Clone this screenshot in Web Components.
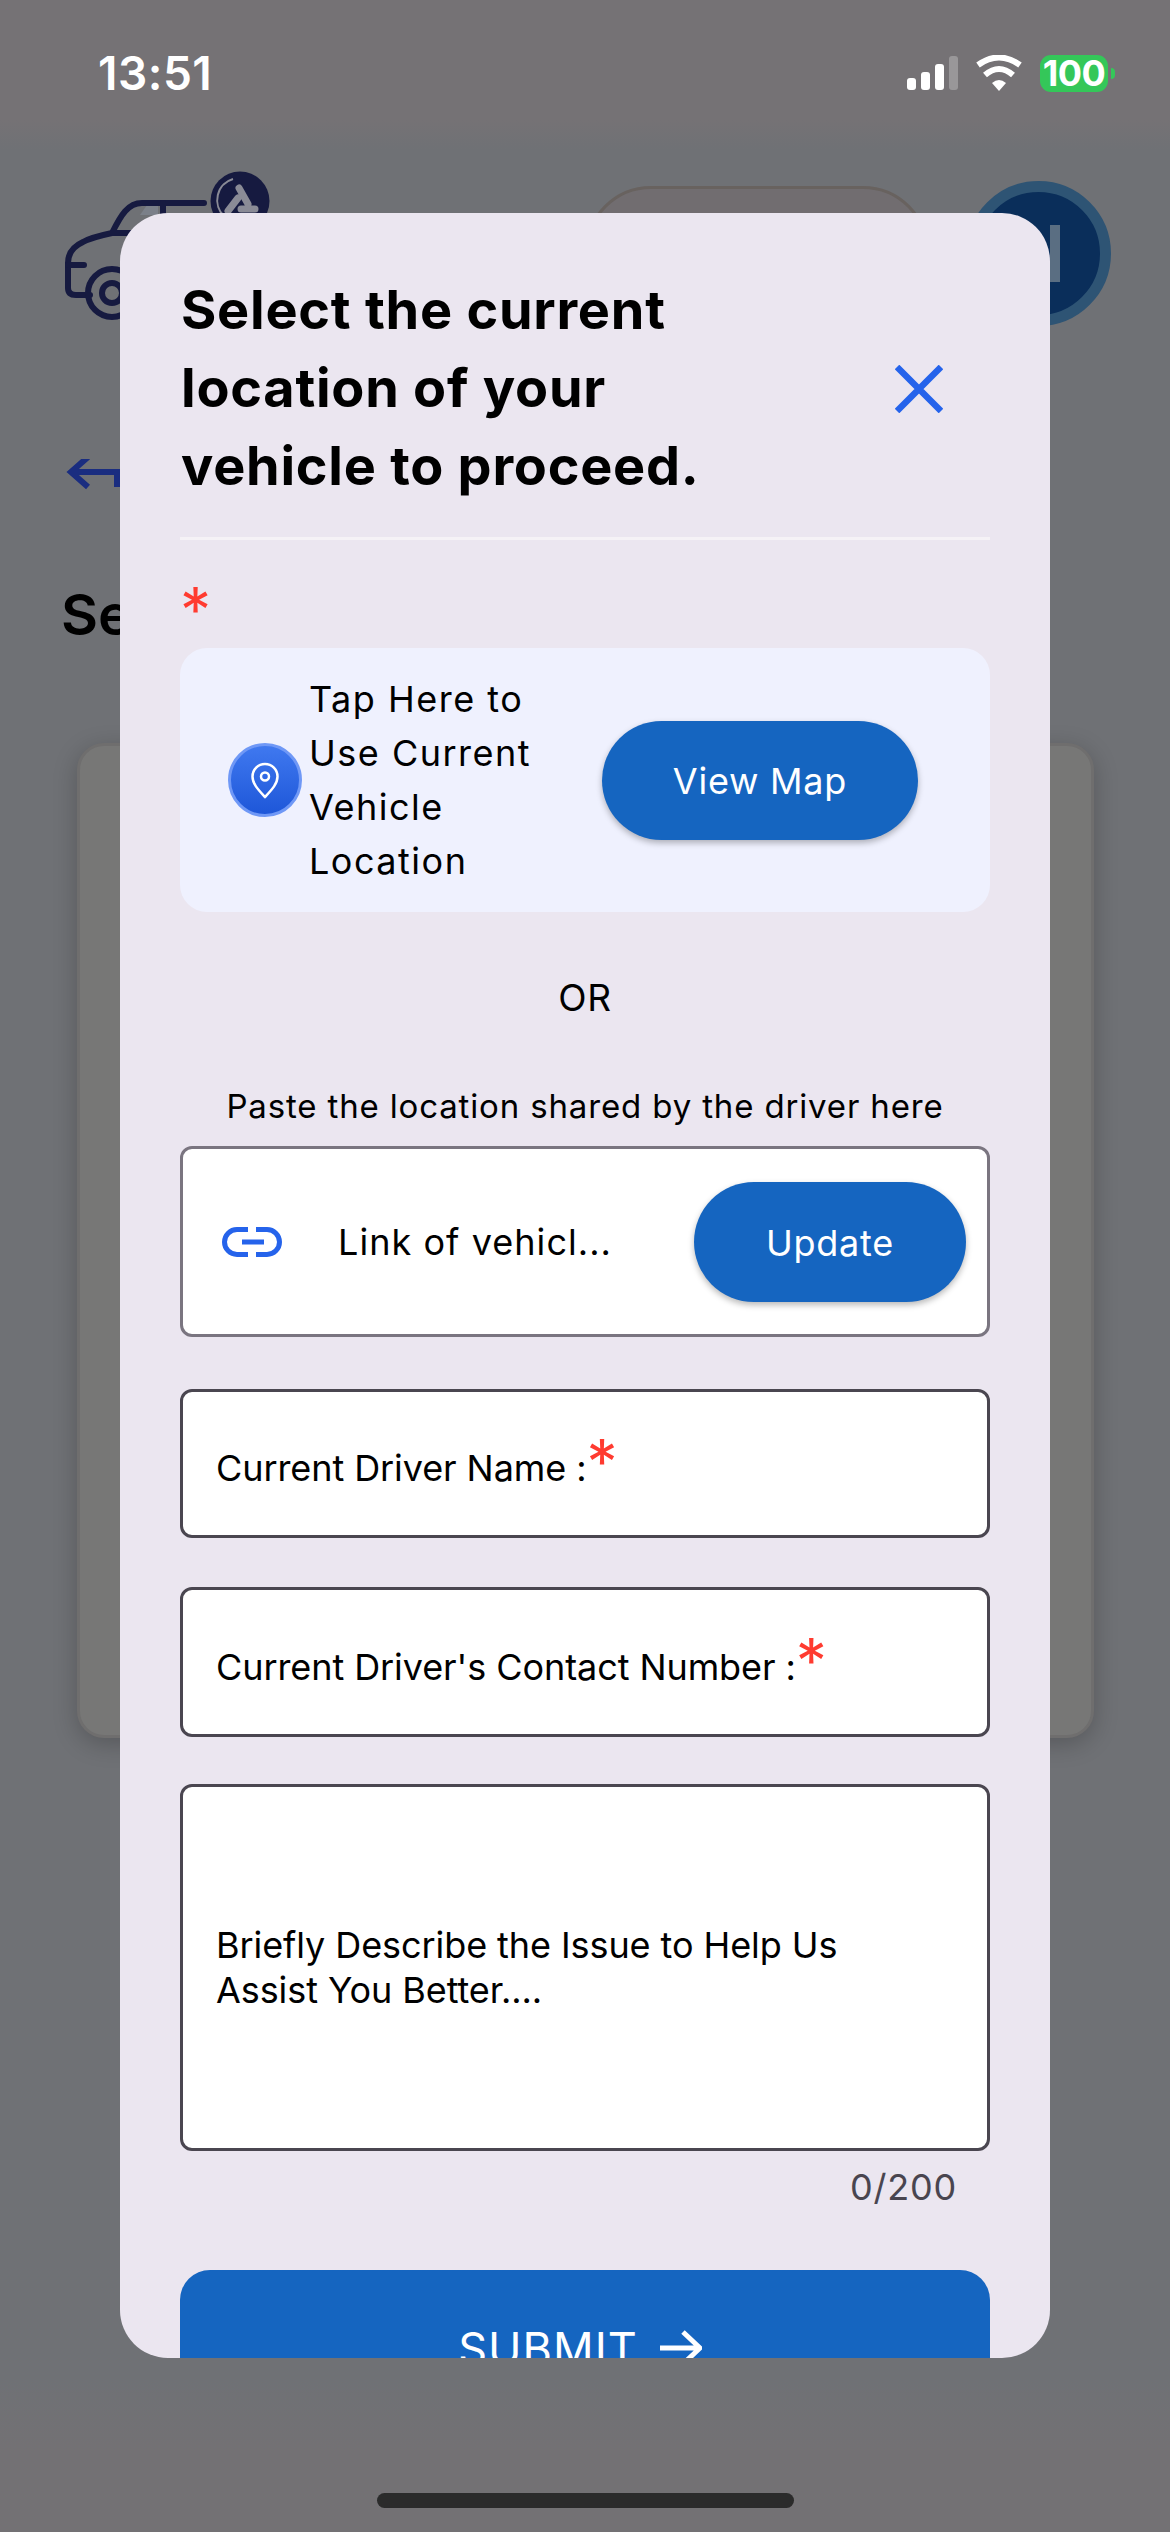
<!DOCTYPE html>
<html lang="en">
<head>
<meta charset="utf-8">
<title>Select location</title>
<style>
html,body{margin:0;padding:0;width:1170px;height:2532px;overflow:hidden;font-family:Inter,"Noto Sans",sans-serif;}
</style>
</head>
<body>
<app-screen>
  <bg-page slot="page"></bg-page>
  <location-modal slot="modal"></location-modal>
</app-screen>
<script>
function def(name, css, html){
  customElements.define(name, class extends HTMLElement{
    constructor(){
      super();
      const r=this.attachShadow({mode:'open'});
      r.innerHTML='<style>'+css+'</style>'+html;
    }
  });
}
def('app-screen',`
 :host{display:block;position:relative;width:1170px;height:2532px;overflow:hidden;font-family:Inter,"Noto Sans",sans-serif;
 background:linear-gradient(180deg,#757275 0,#757275 120px,#6f7175 150px,#6f7175 2380px,#737174 2450px);}
 .m{position:absolute;left:120px;top:213px;}
`,`<slot name="page"></slot><div class="m"><slot name="modal"></slot></div>`);

def('status-bar',`
 :host{display:flex;align-items:center;height:146px;box-sizing:border-box;padding:0 55px 0 98px;color:#fff;}
 .t{font:600 46px/1 Inter,sans-serif;letter-spacing:.5px;flex:1;}
 .right{display:flex;align-items:center;}
 .sig{display:flex;align-items:flex-end;gap:5px;height:34px;margin-right:17px;}
 .sig i{display:block;width:9px;background:#fff;border-radius:3px;}
 .wifi{display:block;margin-right:17px;}
 .bat{width:68px;height:37px;border-radius:11px;background:#34c759;display:flex;align-items:center;justify-content:center;font:700 36px/1 Inter,sans-serif;letter-spacing:-.5px;color:#fff;}
 .tip{width:4px;height:11px;margin-left:3px;background:#34c759;border-radius:0 6px 6px 0;}
`,`<span class="t">13:51</span><div class="right">
 <div class="sig"><i style="height:12px"></i><i style="height:18px"></i><i style="height:26px"></i><i style="height:34px;background:#999799"></i></div>
 <svg class="wifi" width="48" height="36" viewBox="0 0 48 36"><path d="M3 10Q24-5 45 10M10 20Q24 8 38 20" fill="none" stroke="#fff" stroke-width="6"/><path d="M24 36L17 28Q24 22 31 28Z" fill="#fff"/></svg>
 <div class="bat">100</div><div class="tip"></div></div>`);

def('car-logo',`:host{display:block;width:215px;height:165px;} svg{display:block}`,
`<svg width="215" height="165" viewBox="60 170 215 165">
 <path d="M147 205l11 0 0 10-18 0z" fill="#7b8089"/>
 <g fill="none" stroke="#161a40" stroke-width="6" stroke-linecap="round" stroke-linejoin="round">
 <path d="M204 203H142C128 203 121 215 112 233C98 236 90 238 83 242C72 247 68 254 68 263V288C68 293 71 295 76 295H90"/>
 <path d="M68 265H84M112 233H170M163 203V220"/>
 <circle cx="112" cy="293" r="24"/><circle cx="112" cy="293" r="10"/></g>
 <circle cx="240" cy="201" r="29.5" fill="#161a40"/>
 <path d="M233 179A22 22 0 0 0 224 216" fill="none" stroke="#8a8b96" stroke-width="2"/>
 <g stroke="#8a8b96" stroke-width="7" stroke-linecap="round"><path d="M239 188L248 204M228 211L238 198M241 209H255"/></g>
 </svg>`);

def('app-header',`
 :host{display:flex;height:165px;margin-top:24px;padding-left:60px;position:relative;}
 .pill{box-sizing:border-box;width:344px;height:135px;margin:16px 0 0 310px;border-radius:66px;background:#716d70;border:3px solid #68625f;}
 .av{box-sizing:border-box;width:145px;height:145px;margin:11px 0 0 37px;border-radius:50%;background:#0a2e5a;border:11px solid #2e5474;display:flex;align-items:center;justify-content:flex-end;padding-right:40px;}
 .av i{display:block;width:10px;height:57px;background:#5a6e82;}
`,`<car-logo></car-logo><div class="pill"></div><div class="av"><i></i></div>`);

def('bg-page',`
 :host{display:flex;flex-direction:column;height:2532px;}
 .back{display:block;margin:124px 0 0 66px;}
 h2{margin:81px 0 0 61px;font:600 57px/70px Inter,sans-serif;color:#000;height:70px;}
 .card{box-sizing:border-box;margin:93px 0 0 77px;width:1017px;height:995px;border-radius:27px;background:#777776;border:3px solid #6f6e6e;box-shadow:0 6px 24px rgba(0,0,0,.22);}
 .home{width:417px;height:15px;border-radius:8px;background:#2b2b2b;margin:auto auto 24px;}
`,`<status-bar></status-bar><app-header></app-header>
 <svg class="back" width="60" height="40" viewBox="66 460 60 40"><path d="M88 458L71 473L88 488M71 473H117V488" fill="none" stroke="#1a2d80" stroke-width="6"/></svg>
 <h2>Se</h2><div class="card"></div><div class="home"></div>`);

def('pill-button',`
 :host{display:inline-flex;align-items:center;justify-content:center;box-sizing:border-box;padding-top:2px;height:119px;border-radius:60px;background:#1565c0;color:#fff;font:400 36px/1 Inter,sans-serif;letter-spacing:.75px;box-shadow:0 3px 6px rgba(0,0,0,.28);flex:none;}
`,`<slot></slot>`);

def('loc-icon',`:host{display:block;flex:none;width:74px;height:74px;} svg{display:block}`,
`<svg width="74" height="74" viewBox="0 0 74 74"><defs><linearGradient id="g" x1="0" y1="0" x2="0" y2="1"><stop offset="0" stop-color="#4079f0"/><stop offset="1" stop-color="#1d56d8"/></linearGradient></defs>
 <circle cx="37" cy="37" r="35.5" fill="url(#g)" stroke="#6f98f6" stroke-width="3"/>
 <path d="M37 54C30.5 47 24.5 41 24.5 33.500A12.500 12.500 0 0 1 49.500 33.500C49.500 41 43.500 47 37 54Z" fill="none" stroke="#fff" stroke-width="2.500"/>
 <circle cx="37" cy="33.500" r="4" fill="none" stroke="#fff" stroke-width="2.500"/></svg>`);

def('location-card',`
 :host{display:flex;align-items:center;box-sizing:border-box;height:264px;width:810px;border-radius:27px;background:#eff1fe;padding-left:48px;}
 .tx{width:272px;margin-left:7px;margin-right:21px;font:400 36px/54px Inter,sans-serif;letter-spacing:1.5px;color:#000;}
 pill-button{width:316px;}
`,`<loc-icon></loc-icon><div class="tx">Tap Here to Use Current Vehicle Location</div><pill-button>View Map</pill-button>`);

def('link-field',`
 :host{display:flex;align-items:center;box-sizing:border-box;height:191px;width:810px;border:3px solid #7a7580;border-radius:12px;background:#fff;padding-left:39px;padding-right:21px;}
 svg{display:block;flex:none;}
 .tx{margin-left:56px;flex:1;font:400 36px/1 Inter,sans-serif;letter-spacing:1.05px;color:#000;white-space:nowrap;}
 pill-button{width:272px;height:120px;}
`,`<svg width="60" height="30" viewBox="0 0 60 30"><path d="M26 2.500H15A12.500 12.500 0 0 0 15 27.500H26M34 2.500H45A12.500 12.500 0 0 1 45 27.500H34M20 15H42" fill="none" stroke="#2563eb" stroke-width="5"/></svg>
 <span class="tx">Link of vehicl...</span><pill-button>Update</pill-button>`);

def('text-field',`
 :host{display:flex;align-items:center;box-sizing:border-box;width:810px;border:3px solid #4a4650;border-radius:12px;background:#fff;padding-left:33px;padding-right:33px;font:400 36px/45px Inter,sans-serif;letter-spacing:-.08px;color:#000;}
`,`<slot></slot>`);

def('req-mark',`
 :host{display:inline-block;color:#ff3b30;font:400 62px/45px Inter,sans-serif;vertical-align:top;}
`,`*`);

def('location-modal',`
 :host{display:block;box-sizing:border-box;width:930px;height:2145px;border-radius:48px;background:#ebe6f0;overflow:hidden;padding:58px 60px 0;color:#000;}
 .head{display:flex;align-items:center;width:810px;}
 h1{margin:0;flex:1;font:700 54px/78px Inter,sans-serif;letter-spacing:.75px;padding-left:1px;}
 .x{display:block;margin-right:47px;margin-top:2px;}
 .div{height:3px;background:#f5f2f6;margin-top:32px;}
 .req{height:108px;box-sizing:border-box;padding-top:47px;}
 .or{text-align:center;font:400 37px/45px Inter,sans-serif;letter-spacing:.6px;margin-top:63px;}
 .paste{text-align:center;font:400 33px/45px Inter,sans-serif;letter-spacing:.85px;margin-top:64px;margin-bottom:17px;}
 .f2{margin-top:52px;height:149px;padding-top:10px;}
 .f3{margin-top:49px;height:150px;padding-top:10px;}
 .f2 req-mark,.f3 req-mark{margin-top:-7px;}
 .f4{margin-top:47px;height:367px;}
 .count{text-align:right;padding-right:33px;font:400 36px/45px Inter,sans-serif;letter-spacing:.8px;color:#49454f;margin-top:14px;}
 .submit{margin-top:60px;height:152px;box-sizing:border-box;padding:4px 10px 0 0;border-radius:30px;background:#1565c0;color:#fff;display:flex;align-items:center;justify-content:center;gap:22px;font:400 45px/1 Inter,sans-serif;letter-spacing:1px;}
 .submit svg{display:block;}
`,`<div class="head"><h1>Select the current<br>location of your<br>vehicle to proceed.</h1>
 <svg class="x" width="48" height="48" viewBox="0 0 48 48"><path d="M2 2L46 46M46 2L2 46" stroke="#2563eb" stroke-width="6.500" fill="none"/></svg></div>
 <div class="div"></div>
 <div class="req"><req-mark></req-mark></div>
 <location-card></location-card>
 <div class="or">OR</div>
 <div class="paste">Paste the location shared by the driver here</div>
 <link-field></link-field>
 <text-field class="f2"><span>Current Driver Name :<req-mark></req-mark></span></text-field>
 <text-field class="f3"><span>Current Driver's Contact Number :<req-mark></req-mark></span></text-field>
 <text-field class="f4"><span>Briefly Describe the Issue to Help Us<br>Assist You Better....</span></text-field>
 <div class="count">0/200</div>
 <div class="submit"><span>SUBMIT</span><svg width="42" height="36" viewBox="0 0 42 36"><path d="M0 18H39M23 2L40 18L23 34" fill="none" stroke="#fff" stroke-width="5"/></svg></div>`);
</script>
</body>
</html>
